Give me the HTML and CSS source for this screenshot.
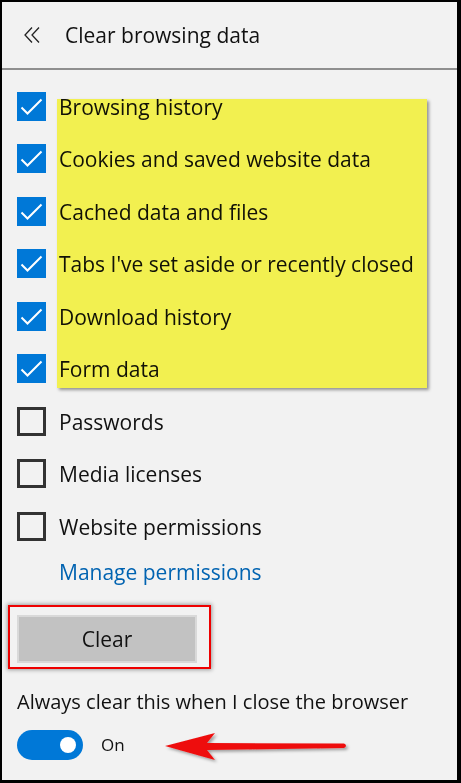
FILE: index.html
```html
<!DOCTYPE html>
<html>
<head>
<meta charset="utf-8">
<link rel="stylesheet" href="styles.css">
</head>
<body>
<div class="frame">
  <header class="header">
    <svg class="back" width="16" height="16" viewBox="0 0 16 16"><path d="M8 0.5 L1 8 L8 15.5 M15 0.5 L8 8 L15 15.5" fill="none" stroke="#222" stroke-width="1.3"/></svg>
    <h1 class="title">Clear browsing data</h1>
  </header>
  <div class="sep"></div>
  <ul class="list">
    <li class="row"><span class="box on"><svg viewBox="0 0 29 29" width="29" height="29"><path d="M4.5 15.5 L10.5 21.5 L24.5 7.5" fill="none" stroke="#fff" stroke-width="2"/></svg></span><span class="label">Browsing history</span></li>
    <li class="row"><span class="box on"><svg viewBox="0 0 29 29" width="29" height="29"><path d="M4.5 15.5 L10.5 21.5 L24.5 7.5" fill="none" stroke="#fff" stroke-width="2"/></svg></span><span class="label">Cookies and saved website data</span></li>
    <li class="row"><span class="box on"><svg viewBox="0 0 29 29" width="29" height="29"><path d="M4.5 15.5 L10.5 21.5 L24.5 7.5" fill="none" stroke="#fff" stroke-width="2"/></svg></span><span class="label">Cached data and files</span></li>
    <li class="row"><span class="box on"><svg viewBox="0 0 29 29" width="29" height="29"><path d="M4.5 15.5 L10.5 21.5 L24.5 7.5" fill="none" stroke="#fff" stroke-width="2"/></svg></span><span class="label">Tabs I've set aside or recently closed</span></li>
    <li class="row"><span class="box on"><svg viewBox="0 0 29 29" width="29" height="29"><path d="M4.5 15.5 L10.5 21.5 L24.5 7.5" fill="none" stroke="#fff" stroke-width="2"/></svg></span><span class="label">Download history</span></li>
    <li class="row"><span class="box on"><svg viewBox="0 0 29 29" width="29" height="29"><path d="M4.5 15.5 L10.5 21.5 L24.5 7.5" fill="none" stroke="#fff" stroke-width="2"/></svg></span><span class="label">Form data</span></li>
    <li class="row"><span class="box off"></span><span class="label">Passwords</span></li>
    <li class="row"><span class="box off"></span><span class="label">Media licenses</span></li>
    <li class="row"><span class="box off"></span><span class="label">Website permissions</span></li>
  </ul>
  <a class="manage" href="#">Manage permissions</a>
  <div class="clear-wrap">
    <button class="clear-btn">Clear</button>
  </div>
  <p class="always">Always clear this when I close the browser</p>
  <div class="toggle-row">
    <span class="toggle"><span class="knob"></span></span>
    <span class="on-label">On</span>
  </div>

  <div class="highlight"></div>
  <svg class="arrow" width="200" height="44" viewBox="0 0 200 44">
    <defs>
      <filter id="sh" x="-10%" y="-30%" width="130%" height="180%">
        <feDropShadow dx="2" dy="2" stdDeviation="1.5" flood-color="#000" flood-opacity="0.35"/>
      </filter>
    </defs>
    <path d="M3 18 L53 5 L45 15 L182 15.5 Q186 17.5 182 20 L45 22 L53 32 Z" fill="#ee1111" filter="url(#sh)"/>
  </svg>
</div>
</body>
</html>
```
FILE: styles.css
```css
* { box-sizing: border-box; }
html, body { margin: 0; padding: 0; }
body {
  width: 461px;
  height: 783px;
  font-family: "Open Sans", "Noto Sans", sans-serif;
  color: #111;
}
.frame {
  position: relative;
  width: 461px;
  height: 783px;
  background: #f2f2f2;
  border-style: solid;
  border-color: #000;
  border-width: 2px 4px 3px 2px;
  overflow: hidden;
}
.header {
  display: flex;
  align-items: center;
  height: 66px;
  padding-left: 22px;
}
.back { display: block; margin-top: 0; }
.title {
  margin: 0 0 0 25px;
  font-size: 21px;
  font-weight: 400;
  color: #111;
}
.sep {
  height: 2px;
  background: #8f8f8f;
}
.list {
  list-style: none;
  margin: 0;
  padding: 10px 0 0 15px;
}
.row {
  display: flex;
  align-items: center;
  height: 52.5px;
}
.box {
  width: 29px;
  height: 29px;
  flex: none;
}
.box svg { display: block; }
.box.on { background: #0078d7; }
.box.off { border: 3px solid #333; }
.label {
  margin-left: 13px;
  font-size: 21px;
  padding-top: 1px;
}
.manage {
  display: block;
  margin: 5px 0 0 57px;
  font-size: 21px;
  color: #0063b1;
  text-decoration: none;
}
.clear-wrap {
  margin: 19px 0 0 6px;
  width: 203px;
  height: 64px;
  border: 2px solid #ee0000;
  padding: 8px 12px 4px 7px;
  box-shadow: 0 0 4px 1px rgba(0,0,0,0.35);
}
.clear-btn {
  display: block;
  width: 180px;
  height: 48px;
  background: #c2c2c2;
  border: 2px solid #d9d9d9;
  font-family: "Open Sans", "Noto Sans", sans-serif;
  font-size: 21px;
  color: #111;
  padding: 0;
}
.always {
  margin: 19px 0 0 15px;
  font-size: 20px;
}
.toggle-row {
  display: flex;
  align-items: center;
  margin: 15px 0 0 15px;
}
.toggle {
  position: relative;
  width: 66px;
  height: 30px;
  border-radius: 15px;
  background: #0078d7;
  flex: none;
}
.knob {
  position: absolute;
  right: 7px;
  top: 7px;
  width: 16px;
  height: 16px;
  border-radius: 50%;
  background: #fff;
}
.on-label {
  margin-left: 18px;
  font-size: 17px;
}
.highlight {
  position: absolute;
  left: 55px;
  top: 97px;
  width: 370px;
  height: 289px;
  background: #fffd54;
  mix-blend-mode: multiply;
  box-shadow: 2px 2px 3px rgba(0,0,0,0.4);
}
.arrow {
  position: absolute;
  left: 160px;
  top: 726px;
}
```
